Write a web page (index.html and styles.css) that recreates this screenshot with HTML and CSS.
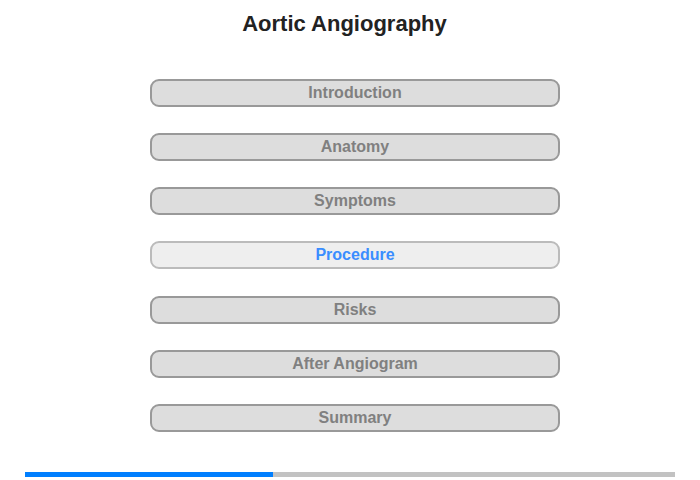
FILE: index.html
```html
<!DOCTYPE html>
<html>
<head>
<meta charset="utf-8">
<link rel="stylesheet" href="styles.css">
</head>
<body>
<div class="page">
  <h1 class="title">Aortic Angiography</h1>
  <nav class="menu">
    <div class="item">Introduction</div>
    <div class="item">Anatomy</div>
    <div class="item">Symptoms</div>
    <div class="item active">Procedure</div>
    <div class="item">Risks</div>
    <div class="item">After Angiogram</div>
    <div class="item">Summary</div>
  </nav>
  <div class="progress"><div class="fill" style="width:38.2%"></div></div>
</div>
</body>
</html>
```
FILE: styles.css
```css
html, body {
  margin: 0;
  padding: 0;
  background: #fff;
}
.page {
  width: 700px;
  height: 480px;
  font-family: "Liberation Sans", Arial, sans-serif;
  display: flex;
  flex-direction: column;
  align-items: center;
}
.title {
  margin: 11px 11px 0 0;
  font-size: 22px;
  line-height: 25px;
  font-weight: bold;
  color: #222;
}
.menu {
  margin: 43px 0 0 10px;
  display: flex;
  flex-direction: column;
  gap: 26.15px;
}
.item {
  box-sizing: border-box;
  width: 410px;
  height: 28px;
  border: 2px solid #999;
  border-radius: 9px;
  background: #ddd;
  color: #808080;
  font-size: 16px;
  font-weight: bold;
  display: flex;
  align-items: center;
  justify-content: center;
}
.item.active {
  background: #eee;
  border-color: #bbb;
  color: #3a8dff;
}
.progress {
  margin-top: 40px;
  width: 650px;
  height: 5px;
  background: #c2c2c2;
  display: flex;
}
.fill {
  background: #007fff;
  height: 100%;
}
```
